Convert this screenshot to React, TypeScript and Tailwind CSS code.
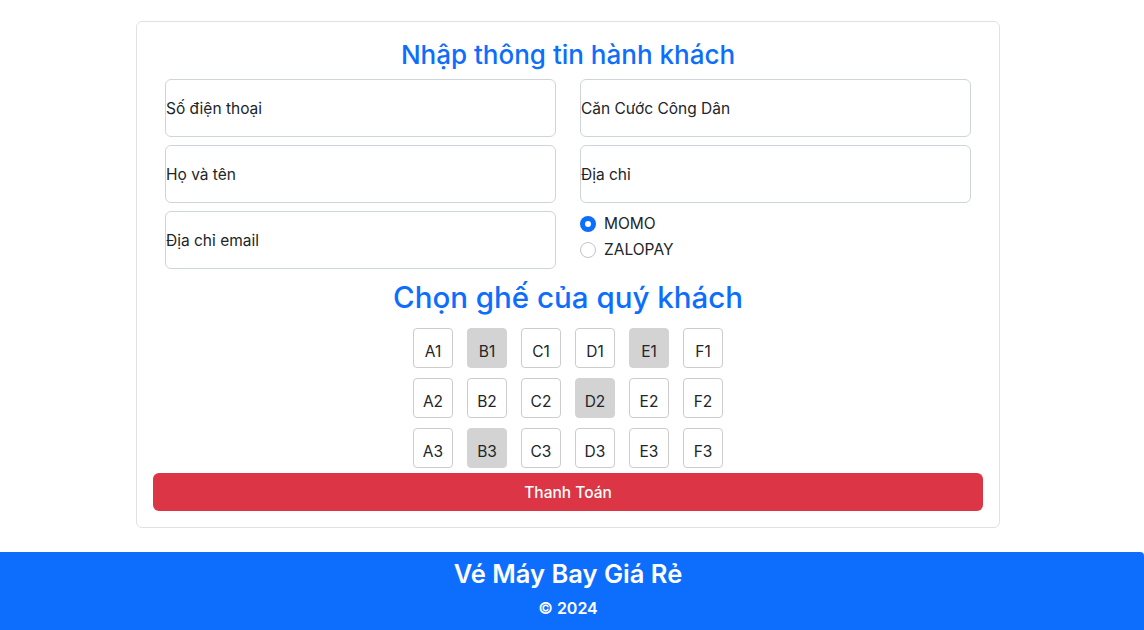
import { useState } from "react"

const rows = [
    ["A1", "B1", "C1", "D1", "E1", "F1"],
    ["A2", "B2", "C2", "D2", "E2", "F2"],
    ["A3", "B3", "C3", "D3", "E3", "F3"],
]

const booked = ["B1", "E1", "D2", "B3"]

function Field({ label }: { label: string }) {
    return (
        <div className="h-[58px] border border-[#ced4da] rounded-[6px] flex items-center pt-[1px] text-[15.5px] text-[#212529]">
            {label}
        </div>
    )
}

export default function App() {
    const [pay, setPay] = useState("MOMO")
    return (
        <div className="w-[1144px] min-h-[630px] bg-white font-['Inter','Liberation_Sans',sans-serif] text-[#212529]">
            <div className="pt-[21px] pl-[136px]">
                <div className="w-[864px] border border-[#dee2e6] rounded-[6px] px-4 pt-[16px] pb-4">
                    <h3 className="text-center text-[26px] leading-[34px] font-medium text-[#0d6efd] mb-[7px]">Nhập thông tin hành khách</h3>
                    <div className="px-3 grid grid-cols-2 gap-x-6 gap-y-2">
                        <Field label="Số điện thoại" />
                        <Field label="Căn Cước Công Dân" />
                        <Field label="Họ và tên" />
                        <Field label="Địa chỉ" />
                        <Field label="Địa chỉ email" />
                        <div className="flex flex-col gap-[2px] pt-[1px]">
                            {["MOMO", "ZALOPAY"].map((p) => (
                                <label key={p} className="h-6 flex items-center gap-2 cursor-pointer" onClick={() => setPay(p)}>
                                    {pay === p ? (
                                        <span className="size-4 rounded-full bg-[#0d6efd] flex items-center justify-center">
                                            <span className="size-[6px] rounded-full bg-white" />
                                        </span>
                                    ) : (
                                        <span className="size-4 rounded-full border border-[#bfc4c9] bg-white" />
                                    )}
                                    <span className="text-[15.5px]">{p}</span>
                                </label>
                            ))}
                        </div>
                    </div>
                    <h2 className="text-center text-[29.5px] leading-[36px] font-medium text-[#0d6efd] mt-[10px] mb-[13px]">Chọn ghế của quý khách</h2>
                    <div className="flex flex-col items-center gap-[10px]">
                        {rows.map((r, i) => (
                            <div key={i} className="flex gap-[14px]">
                                {r.map((s) => (
                                    <div
                                        key={s}
                                        className={`size-10 rounded-[4px] border flex items-center justify-center pt-[7px] text-[15.5px] ${booked.includes(s) ? "bg-[#d3d3d3] border-[#d3d3d3]" : "bg-white border-[#cccccc]"}`}
                                    >
                                        {s}
                                    </div>
                                ))}
                            </div>
                        ))}
                    </div>
                    <button className="mt-[5px] w-full h-[38px] pt-[2px] bg-[#dc3545] text-white text-[15.5px] font-medium rounded-[6px]">Thanh Toán</button>
                </div>
            </div>
            <footer className="mt-6 bg-[#0d6efd] text-white text-center pt-[7px] pb-[10px] pr-2 rounded-tr-[4px]">
                <h4 className="text-[25.5px] leading-[29px] font-semibold mb-2">Vé Máy Bay Giá Rẻ</h4>
                <p className="text-[16px] leading-6 font-semibold">© 2024</p>
            </footer>
        </div>
    )
}
